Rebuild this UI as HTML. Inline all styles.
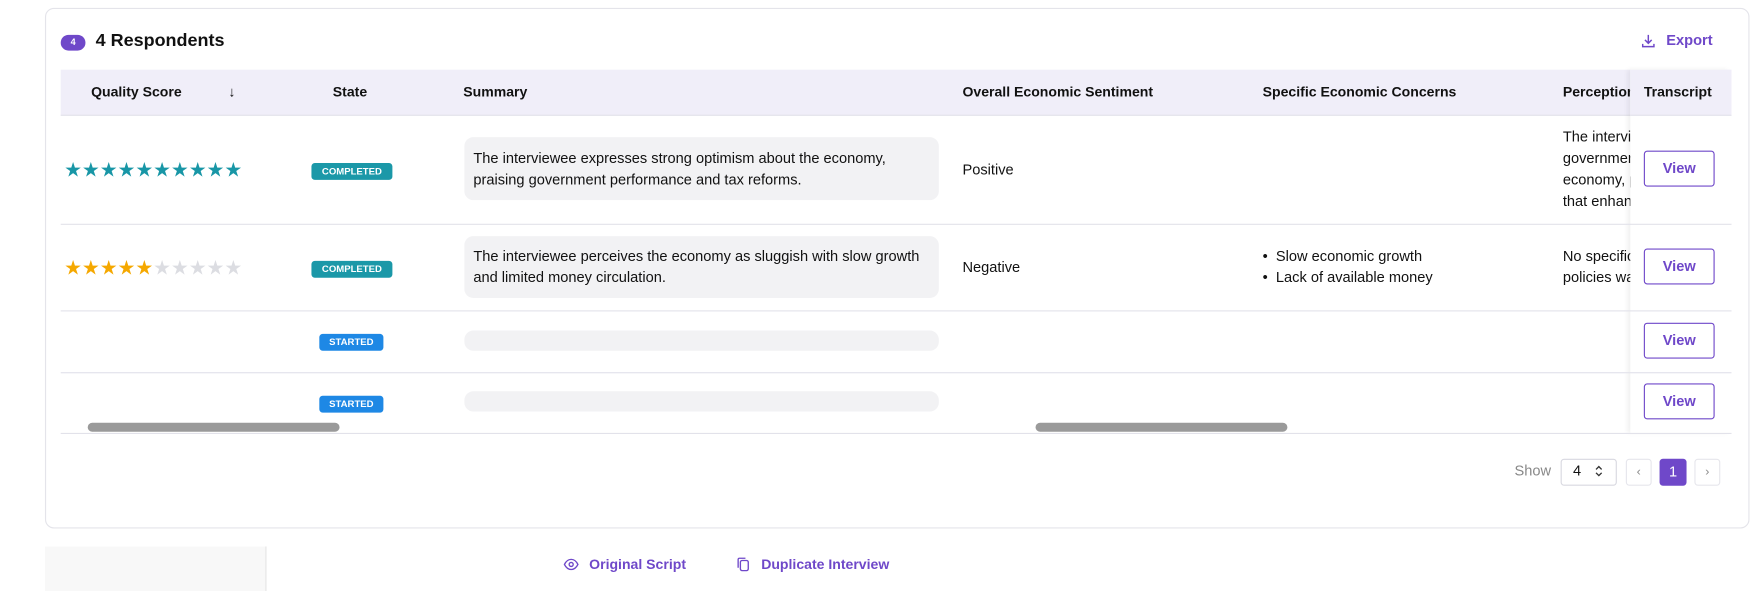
<!DOCTYPE html>
<html><head><meta charset="utf-8"><style>
html,body{margin:0;padding:0;background:#fff;width:1763px;height:586px;overflow:hidden;font-family:"Liberation Sans",sans-serif;}
#w{position:absolute;left:0;top:0;width:1568px;height:521px;transform:scale(1.12436);transform-origin:0 0;}
.a{position:absolute;}
.card{left:40px;top:7px;width:1514px;height:461px;border:1px solid #e4e4ea;border-radius:8px;}
.hdr{left:54px;top:62px;width:1486px;height:40px;background:#f0eef9;border-bottom:1px solid #e2e2ea;}
.th{font-size:12.5px;font-weight:bold;color:#111;top:75px;}
.line{left:54px;width:1486px;height:1px;background:#e2e2ea;}
.t{font-size:13px;color:#111;line-height:19px;}
.star{font-size:18px;line-height:18px;letter-spacing:-0.3px;}
.badge{color:#fff;font-size:8.5px;font-weight:bold;text-align:center;border-radius:3px;line-height:15px;height:15px;}
.sum{left:413px;width:422px;background:#f2f2f4;border-radius:8px;}
.view{left:1462px;width:61px;height:30px;border:1px solid #6f48c9;border-radius:3px;color:#6f48c9;font-size:13px;font-weight:bold;text-align:center;line-height:30px;background:#fff;}
.pur{color:#6f48c9;font-weight:bold;font-size:12.5px;}
</style></head><body><div id="w">
<div class="a card"></div>
<div class="a" style="left:54px;top:31px;width:22px;height:14px;border-radius:7px;background:#6f48c9;color:#fff;font-size:8px;font-weight:bold;text-align:center;line-height:14px;">4</div>
<div class="a" style="left:85px;top:28px;font-size:16px;font-weight:bold;color:#111;">4 Respondents</div>
<svg class="a" style="left:1459px;top:29px" width="14" height="14" viewBox="0 0 14 14" fill="none" stroke="#6f48c9" stroke-width="1.3"><path d="M7 2v7M4 6.5 7 9.5 10 6.5M2 10v2.5h10V10"/></svg>
<div class="a pur" style="left:1482px;top:28px;font-size:13px;">Export</div>

<div class="a hdr"></div>
<div class="a th" style="left:81px">Quality Score</div>
<div class="a th" style="left:203px">↓</div>
<div class="a th" style="left:296px">State</div>
<div class="a th" style="left:412px">Summary</div>
<div class="a th" style="left:856px">Overall Economic Sentiment</div>
<div class="a th" style="left:1123px">Specific Economic Concerns</div>
<div class="a th" style="left:1390px;width:60px;overflow:hidden;white-space:nowrap">Perception of Government</div>
<div class="a" style="left:1450px;top:62px;width:90px;height:323px;background:#fff;box-shadow:-3px 0 4px rgba(0,0,0,0.06);"></div>
<div class="a" style="left:1450px;top:62px;width:90px;height:40px;background:#f0eef9;border-bottom:1px solid #e2e2ea"></div>
<div class="a th" style="left:1462px">Transcript</div>

<div class="a line" style="top:199px"></div>
<div class="a line" style="top:276px"></div>
<div class="a line" style="top:331px"></div>
<div class="a line" style="top:385px"></div>

<!-- row1 -->
<div class="a star" style="left:57px;top:142px;color:#1896a6">★★★★★★★★★★</div>
<div class="a badge" style="left:277px;top:145px;width:72px;background:#1b98a8">COMPLETED</div>
<div class="a sum" style="top:122px;height:56px"></div>
<div class="a t" style="left:421px;top:131px">The interviewee expresses strong optimism about the economy,<br>praising government performance and tax reforms.</div>
<div class="a t" style="left:856px;top:141px">Positive</div>
<div class="a t" style="left:1390px;top:112px;width:60px;overflow:hidden;white-space:nowrap">The interviewee<br>government<br>economy, p<br>that enhan</div>
<div class="a view" style="top:134px">View</div>

<!-- row2 -->
<div class="a star" style="left:57px;top:229px;color:#f5a800">★★★★★<span style="color:#dcdde2">★★★★★</span></div>
<div class="a badge" style="left:277px;top:232px;width:72px;background:#1b98a8">COMPLETED</div>
<div class="a sum" style="top:210px;height:55px"></div>
<div class="a t" style="left:421px;top:218px">The interviewee perceives the economy as sluggish with slow growth<br>and limited money circulation.</div>
<div class="a t" style="left:856px;top:228px">Negative</div>
<div class="a t" style="left:1123px;top:218px">•&nbsp; Slow economic growth<br>•&nbsp; Lack of available money</div>
<div class="a t" style="left:1390px;top:218px;width:60px;overflow:hidden;white-space:nowrap">No specific<br>policies was</div>
<div class="a view" style="top:221px">View</div>

<!-- row3 -->
<div class="a badge" style="left:284px;top:297px;width:57px;background:#1e88e5">STARTED</div>
<div class="a sum" style="top:294px;height:18px"></div>
<div class="a view" style="top:287px">View</div>
<!-- row4 -->
<div class="a badge" style="left:284px;top:352px;width:57px;background:#1e88e5">STARTED</div>
<div class="a sum" style="top:348px;height:18px"></div>
<div class="a view" style="top:341px">View</div>

<div class="a" style="left:78px;top:376px;width:224px;height:8px;border-radius:4px;background:#9a9a9a"></div>
<div class="a" style="left:921px;top:376px;width:224px;height:8px;border-radius:4px;background:#9a9a9a"></div>

<!-- pagination -->
<div class="a" style="left:1347px;top:411px;font-size:13px;color:#888">Show</div>
<div class="a" style="left:1388px;top:408px;width:48px;height:22px;border:1px solid #d8d8e0;border-radius:3px;"></div>
<div class="a" style="left:1399px;top:411px;font-size:13px;color:#111">4</div>
<svg class="a" style="left:1418px;top:413px" width="8" height="12" viewBox="0 0 8 12" fill="none" stroke="#333" stroke-width="1.2"><path d="M1.5 4.5 4 2l2.5 2.5M1.5 7.5 4 10l2.5-2.5"/></svg>
<div class="a" style="left:1446px;top:408px;width:21px;height:22px;border:1px solid #e6e6ec;border-radius:3px;color:#888;font-size:11px;text-align:center;line-height:22px">‹</div>
<div class="a" style="left:1476px;top:408px;width:24px;height:24px;background:#6f48c9;border-radius:3px;color:#fff;font-size:13px;text-align:center;line-height:24px">1</div>
<div class="a" style="left:1507px;top:408px;width:21px;height:22px;border:1px solid #e6e6ec;border-radius:3px;color:#888;font-size:11px;text-align:center;line-height:22px">›</div>

<!-- footer -->
<div class="a" style="left:40px;top:486px;width:196px;height:40px;background:#f8f8f8;border-right:1px solid #e6e6e6"></div>
<svg class="a" style="left:501px;top:496px" width="14" height="12" viewBox="0 0 14 12" fill="none" stroke="#6f48c9" stroke-width="1.2"><path d="M1 6c1.5-3 3.5-4.5 6-4.5S11.5 3 13 6c-1.5 3-3.5 4.5-6 4.5S2.5 9 1 6z"/><circle cx="7" cy="6" r="1.8"/></svg>
<div class="a pur" style="left:524px;top:495px">Original Script</div>
<svg class="a" style="left:655px;top:495px" width="12" height="14" viewBox="0 0 12 14" fill="none" stroke="#6f48c9" stroke-width="1.2"><rect x="3.5" y="3.5" width="7" height="9" rx="1.5"/><path d="M1.5 10V2.5a1 1 0 0 1 1-1H8"/></svg>
<div class="a pur" style="left:677px;top:495px">Duplicate Interview</div>
</div></body></html>
